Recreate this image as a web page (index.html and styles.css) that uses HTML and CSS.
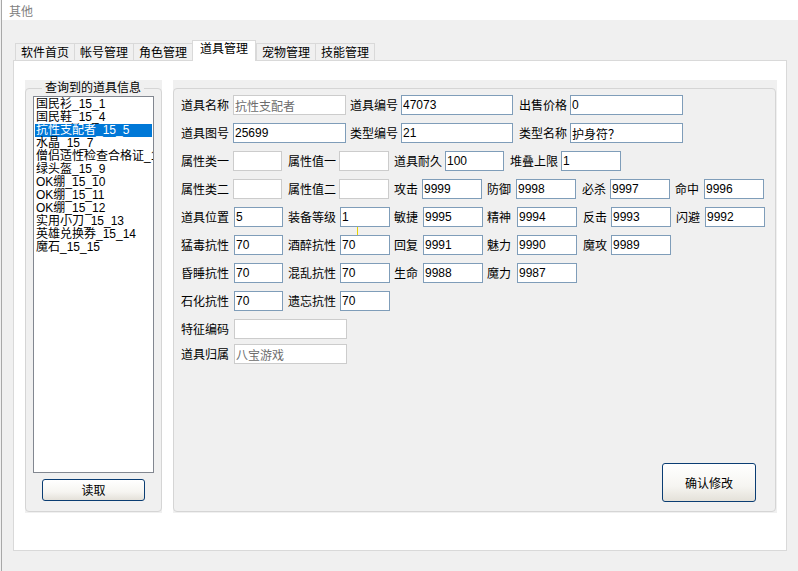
FILE: index.html
```html
<!DOCTYPE html>
<html lang="zh-CN">
<head>
<meta charset="utf-8">
<title>其他</title>
<link rel="stylesheet" href="styles.css">
</head>
<body>
<div class="win">
  <div class="titlebar">其他</div>
  <div class="main">
    <div class="tabs">
      <div class="tab">软件首页</div>
      <div class="tab">帐号管理</div>
      <div class="tab">角色管理</div>
      <div class="tab active">道具管理</div>
      <div class="tab">宠物管理</div>
      <div class="tab">技能管理</div>
    </div>
    <div class="panel">
      <div class="gb gb-left">
        <div class="frame frame-left">
          <span class="gb-title">查询到的道具信息</span>
          <ul class="list">
            <li>国民衫_15_1</li>
            <li>国民鞋_15_4</li>
            <li class="sel">抗性支配者_15_5</li>
            <li>水晶_15_7</li>
            <li>僧侣适性检查合格证_15_8</li>
            <li>绿头盔_15_9</li>
            <li>OK绷_15_10</li>
            <li>OK绷_15_11</li>
            <li>OK绷_15_12</li>
            <li>实用小刀_15_13</li>
            <li>英雄兑换券_15_14</li>
            <li>魔石_15_15</li>
          </ul>
          <button class="btn btn-read">读取</button>
        </div>
      </div>
      <div class="gb gb-right">
        <div class="frame frame-right">
          <div class="rows">
            <div class="row">
              <div class="fd"><span class="lb l52">道具名称</span><input class="in w113 dis" value="抗性支配者" disabled></div>
              <div class="fd g4"><span class="lb l51">道具编号</span><input class="in w112" value="47073"></div>
              <div class="fd g6"><span class="lb l51">出售价格</span><input class="in w113" value="0"></div>
            </div>
            <div class="row">
              <div class="fd"><span class="lb l52">道具图号</span><input class="in w113" value="25699"></div>
              <div class="fd g4"><span class="lb l51">类型编号</span><input class="in w112" value="21"></div>
              <div class="fd g6"><span class="lb l51">类型名称</span><input class="in w113" value="护身符？"></div>
            </div>
            <div class="row">
              <div class="fd"><span class="lb l52">属性类一</span><input class="in w49 dis" value="" disabled></div>
              <div class="fd g6"><span class="lb l51">属性值一</span><input class="in w50 dis" value="" disabled></div>
              <div class="fd g5"><span class="lb l51">道具耐久</span><input class="in w59" value="100"></div>
              <div class="fd g6"><span class="lb l51">堆叠上限</span><input class="in w60" value="1"></div>
            </div>
            <div class="row">
              <div class="fd"><span class="lb l52">属性类二</span><input class="in w49 dis" value="" disabled></div>
              <div class="fd g6"><span class="lb l51">属性值二</span><input class="in w50 dis" value="" disabled></div>
              <div class="fd g5"><span class="lb l28">攻击</span><input class="in w60" value="9999"></div>
              <div class="fd g5"><span class="lb l29">防御</span><input class="in w60" value="9998"></div>
              <div class="fd g6"><span class="lb l28">必杀</span><input class="in w60" value="9997"></div>
              <div class="fd g5"><span class="lb l29">命中</span><input class="in w60" value="9996"></div>
            </div>
            <div class="row">
              <div class="fd"><span class="lb l53">道具位置</span><input class="in w49" value="5"></div>
              <div class="fd g5 mark-host"><span class="lb l52">装备等级</span><input class="in w50" value="1"><span class="mark"></span></div>
              <div class="fd g4"><span class="lb l29">敏捷</span><input class="in w60" value="9995"></div>
              <div class="fd g4"><span class="lb l30">精神</span><input class="in w60" value="9994"></div>
              <div class="fd g6"><span class="lb l28">反击</span><input class="in w60" value="9993"></div>
              <div class="fd g5"><span class="lb l29">闪避</span><input class="in w60" value="9992"></div>
            </div>
            <div class="row">
              <div class="fd"><span class="lb l53">猛毒抗性</span><input class="in w49" value="70"></div>
              <div class="fd g5"><span class="lb l52">酒醉抗性</span><input class="in w50" value="70"></div>
              <div class="fd g4"><span class="lb l29">回复</span><input class="in w60" value="9991"></div>
              <div class="fd g4"><span class="lb l30">魅力</span><input class="in w60" value="9990"></div>
              <div class="fd g6"><span class="lb l28">魔攻</span><input class="in w60" value="9989"></div>
            </div>
            <div class="row">
              <div class="fd"><span class="lb l53">昏睡抗性</span><input class="in w49" value="70"></div>
              <div class="fd g5"><span class="lb l52">混乱抗性</span><input class="in w50" value="70"></div>
              <div class="fd g4"><span class="lb l29">生命</span><input class="in w60" value="9988"></div>
              <div class="fd g4"><span class="lb l30">魔力</span><input class="in w60" value="9987"></div>
            </div>
            <div class="row">
              <div class="fd"><span class="lb l53">石化抗性</span><input class="in w49" value="70"></div>
              <div class="fd g5"><span class="lb l52">遗忘抗性</span><input class="in w50" value="70"></div>
            </div>
            <div class="row">
              <div class="fd"><span class="lb l53">特征编码</span><input class="in w113 dis" value="" disabled></div>
            </div>
            <div class="row row-last">
              <div class="fd"><span class="lb l53">道具归属</span><input class="in w113 dis" value="八宝游戏" disabled></div>
            </div>
          </div>
          <button class="btn btn-confirm">确认修改</button>
        </div>
      </div>
    </div>
  </div>
</div>
</body>
</html>
```

FILE: styles.css
```css
* { box-sizing: border-box; }

html, body {
  margin: 0;
  padding: 0;
  background: #f0f0f0;
  font-family: "Noto Sans CJK SC", "Liberation Sans", sans-serif;
  font-size: 12px;
  color: #000;
}

.win {
  margin-left: 1px;
  border-left: 1px solid #a8a8a8;
  height: 571px;
  background: #f0f0f0;
}

.titlebar {
  height: 20px;
  background: #fff;
  color: #808080;
  padding-left: 7px;
  padding-top: 1px;
  line-height: 20px;
  font-size: 12px;
}

.main {
  padding: 20px 11px 0 11px;
}

.tabs {
  display: flex;
  align-items: flex-end;
  height: 20px;
  padding-left: 2px;
  position: relative;
  z-index: 2;
}

.tab {
  width: 60px;
  height: 17px;
  margin-right: -1px;
  border: 1px solid #d9d9d9;
  border-bottom: none;
  background: #f0f0f0;
  text-align: center;
  line-height: 16px;
  font-size: 12px;
  white-space: nowrap;
}

.tab.active {
  width: 64px;
  height: 21px;
  margin-right: 0;
  margin-bottom: -1px;
  background: #fff;
  line-height: 14px;
  position: relative;
  z-index: 3;
}

.panel {
  height: 491px;
  width: 774px;
  border: 1px solid #d9d9d9;
  background: #fff;
  display: flex;
  gap: 11px;
  padding: 19px 9px 37px 11px;
}

.gb {
  background: #f0f0f0;
  display: flex;
  flex-direction: column;
  height: 433px;
}

.gb-left { width: 137px; }
.gb-right { width: 604px; }

.frame {
  flex: 1;
  margin-top: 8px;
  margin-bottom: 1px;
  border: 1px solid #d5d5d5;
  border-radius: 4px;
  display: flex;
  flex-direction: column;
}

.frame-right { margin-right: 1px; }

.gb-title {
  align-self: flex-start;
  margin-top: -9px;
  margin-left: 16px;
  padding: 0 3px;
  background: #f0f0f0;
  line-height: 14px;
  height: 14px;
  font-size: 12px;
  white-space: nowrap;
}

.list {
  list-style: none;
  margin: 2px 0 0 7px;
  padding: 1px 1px 0 1px;
  width: 121px;
  height: 377px;
  background: #fff;
  border: 1px solid #828790;
  overflow: hidden;
  font-family: "Liberation Sans", "Noto Sans CJK SC", sans-serif;
}

.list li {
  height: 13px;
  line-height: 12px;
  font-size: 12px;
  padding-left: 1px;
  white-space: nowrap;
}

.list li.sel {
  background: #0078d7;
  color: #fff;
}

.btn {
  font-family: "Noto Sans CJK SC", "Liberation Sans", sans-serif;
  font-size: 12px;
  color: #000;
  border: 1px solid #0a3d73;
  border-radius: 3px;
  background: linear-gradient(#ffffff, #f6f5f1 60%, #e4e1d9);
  padding: 0;
  line-height: 1;
}

.btn-read {
  align-self: center;
  width: 103px;
  height: 22px;
  margin-top: 6px;
}

.btn-confirm {
  align-self: flex-end;
  margin-top: auto;
  margin-right: 19px;
  margin-bottom: 9px;
  width: 94px;
  height: 39px;
}

.rows {
  display: flex;
  flex-direction: column;
  gap: 8px;
  padding: 6px 0 0 7px;
}

.row {
  display: flex;
  height: 20px;
}

.row-last { margin-top: -3px; }

.fd {
  display: flex;
  align-items: center;
  height: 20px;
}

.mark-host { position: relative; }

.mark {
  position: absolute;
  left: 69px;
  top: 20px;
  width: 1px;
  height: 8px;
  background: #e6d200;
}

.g4 { margin-left: 4px; }
.g5 { margin-left: 5px; }
.g6 { margin-left: 6px; }

.lb {
  white-space: nowrap;
  font-size: 12px;
  line-height: 14px;
  flex: none;
}

.l28 { width: 28px; }
.l29 { width: 29px; }
.l30 { width: 30px; }
.l51 { width: 51px; }
.l52 { width: 52px; }
.l53 { width: 53px; }

.in {
  height: 20px;
  border: 1px solid #7f9db9;
  background: #fff;
  padding: 0 1px;
  margin: 0;
  font-family: "Liberation Sans", "Noto Sans CJK SC", sans-serif;
  font-size: 12px;
  color: #000;
  outline: none;
  border-radius: 0;
  flex: none;
}

.in.dis {
  border-color: #cccccc;
  color: #6d6d6d;
  background: #fff;
}

.w49 { width: 49px; }
.w50 { width: 50px; }
.w59 { width: 59px; }
.w60 { width: 60px; }
.w112 { width: 112px; }
.w113 { width: 113px; }
```
